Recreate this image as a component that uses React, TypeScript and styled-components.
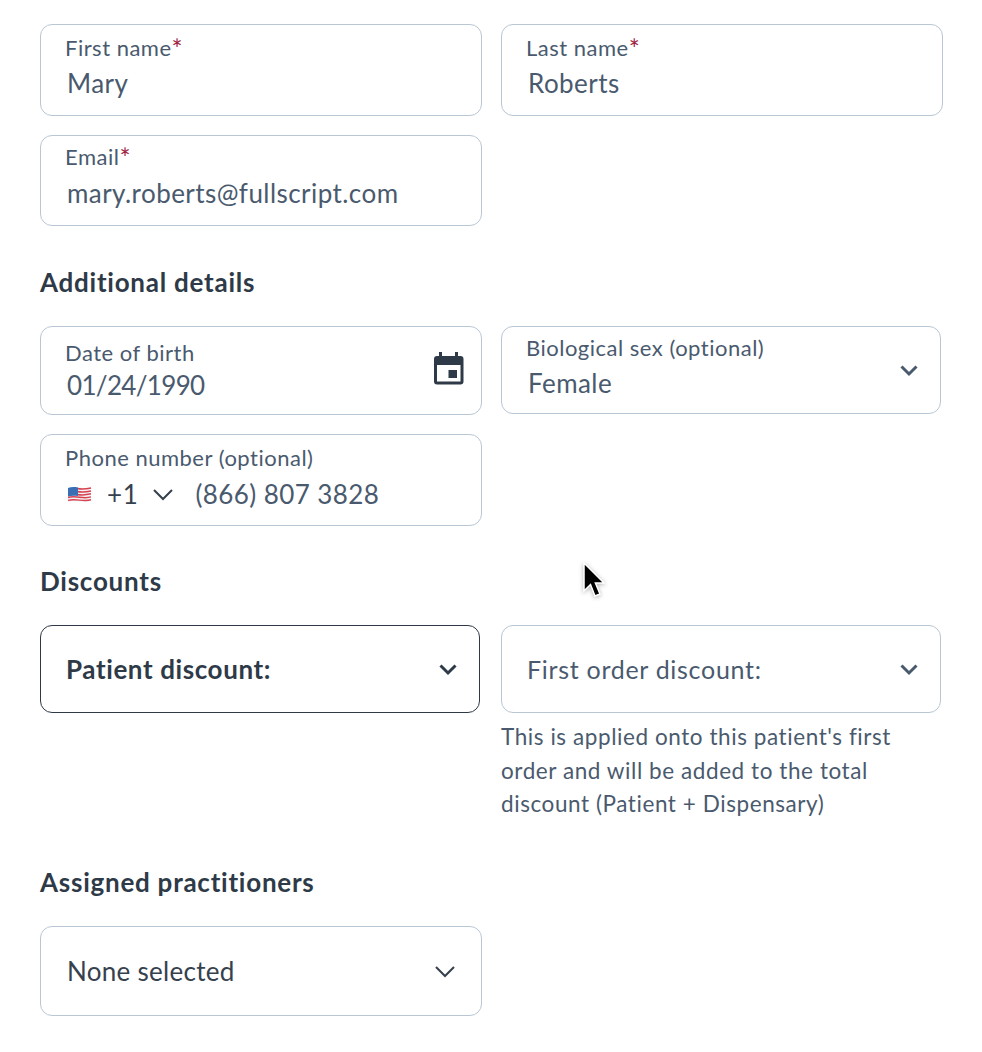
import React from 'react';
import styled, { createGlobalStyle } from 'styled-components';

const GlobalStyle = createGlobalStyle`
  html, body {
    margin: 0;
    padding: 0;
    background: #fff;
  }
  body {
    font-family: "Lato", "Open Sans", sans-serif;
    color: #4a5a6e;
  }
`;

const Page = styled.div`
  position: relative;
  width: 982px;
  height: 1052px;
  box-sizing: border-box;
  padding: 24px 0 0 40px;
  overflow: hidden;
`;

const Row = styled.div<{ $mb?: number; $gap?: number }>`
  display: flex;
  align-items: flex-start;
  gap: ${(p) => p.$gap ?? 19}px;
  margin-bottom: ${(p) => p.$mb ?? 19}px;
`;

const Column = styled.div`
  display: flex;
  flex-direction: column;
`;

const Box = styled.div<{ $w?: number; $h: number; $dark?: boolean; $pr?: number }>`
  box-sizing: border-box;
  width: ${(p) => p.$w ?? 442}px;
  height: ${(p) => p.$h}px;
  border: 1px solid ${(p) => (p.$dark ? '#2e3a47' : '#b9c6d3')};
  border-radius: 12px;
  background: #fff;
  display: flex;
  align-items: center;
  justify-content: space-between;
  padding: 0 ${(p) => p.$pr ?? 20}px 0 24px;
`;

const Stack = styled.div`
  display: flex;
  flex-direction: column;
`;

const Label = styled.div<{ $mt?: number }>`
  font-size: 22px;
  line-height: 24px;
  letter-spacing: 0.5px;
  color: #4a5a6e;
  margin-top: ${(p) => p.$mt ?? 0}px;
  white-space: nowrap;
`;

const Req = styled.span`
  color: #9e2343;
  font-size: 26px;
  line-height: 0;
  vertical-align: -3px;
`;

const Value = styled.div<{ $mt?: number; $dark?: boolean; $ls?: number }>`
  font-size: 26px;
  line-height: 30px;
  letter-spacing: ${(p) => p.$ls ?? 0.44}px;
  color: ${(p) => (p.$dark ? '#36414e' : '#4a5a6e')};
  margin: ${(p) => p.$mt ?? 8}px 0 0 2px;
  white-space: nowrap;
`;

const Prompt = styled.div<{ $bold?: boolean }>`
  font-size: ${(p) => (p.$bold ? 26 : 25)}px;
  letter-spacing: ${(p) => (p.$bold ? 0.6 : 0.7)}px;
  font-weight: ${(p) => (p.$bold ? 700 : 400)};
  color: ${(p) => (p.$bold ? '#2e3a47' : '#4a5a6e')};
  margin-left: 1px;
  white-space: nowrap;
`;

const Heading = styled.h2<{ $mb: number }>`
  margin: 0 0 ${(p) => p.$mb}px;
  font-size: 26px;
  line-height: 30px;
  font-weight: 700;
  letter-spacing: 0.75px;
  color: #2e3a47;
`;

const Help = styled.p`
  width: 420px;
  margin: 7px 0 0;
  font-size: 22.5px;
  line-height: 33.5px;
  letter-spacing: 0.57px;
  color: #4a5a6e;
`;

const PhoneLine = styled.div`
  display: flex;
  align-items: center;
  margin: 9px 0 0 2px;
  height: 30px;
`;

const Dial = styled.span`
  font-size: 26px;
  letter-spacing: 0.6px;
  color: #36414e;
  margin: 0 14px 0 15px;
`;

const PhoneNumber = styled.span`
  font-size: 26px;
  letter-spacing: 0.42px;
  color: #4a5a6e;
  margin-left: 21px;
`;

const Cursor = styled.svg`
  position: absolute;
  left: 580px;
  top: 560px;
  filter: drop-shadow(0 1px 2px rgba(0, 0, 0, 0.3));
`;

const CalendarSvg = styled.svg`
  margin-bottom: 4px;
`;

const Chevron = ({ thin = false, color = '#4a5a6e' }: { thin?: boolean; color?: string }) => (
  <svg width="22" height="14" viewBox="0 0 22 14" fill="none">
    <path
      d={thin ? 'M2 3l9 9 9-9' : 'M3.500 3.500L11 11l7.500-7.500'}
      stroke={color}
      strokeWidth={thin ? 2 : 3}
    />
  </svg>
);

const CalendarIcon = () => (
  <CalendarSvg width="30" height="33" viewBox="0 0 30 33">
    <path
      fill="#2e3a47"
      fillRule="evenodd"
      d="M5 0h3v4h13V0h3v4h2.500A3 3 0 0 1 29.500 7v22.500a3 3 0 0 1-3 3H3a3 3 0 0 1-3-3V7a3 3 0 0 1 3-3h2V0zM3 13v16.500h23.500V13H3zm11.500 5H23v8h-8.500v-8z"
    />
  </CalendarSvg>
);

const Flag = () => (
  <svg width="25" height="19" viewBox="0 0 25 19">
    <path fill="#f3f3f5" d="M1 3c8-3 15 2 23-1v14c-8 3-15-2-23 1z" />
    <path
      fill="none"
      stroke="#d9414f"
      strokeWidth="1.500"
      d="M10 3.600c5 1 9 .6 14-.6M10 6.500c5 1 9 .6 14-.6M10 9.400c5 1 9 .6 14-.6M1 12.500c8-2.500 15 2 23-.6M1 15.400c8-2.500 15 2 23-.6"
    />
    <path fill="#3a6fb5" d="M1 3c3-1.100 6-1.100 10-.5v8.500c-4-.6-7-.5-10 .5z" />
  </svg>
);

const Pointer = () => (
  <Cursor width="28" height="40" viewBox="0 0 28 40">
    <path
      d="M4 3v28l6.500-6.500 4.500 11.500 5-2-4.600-11H24z"
      fill="#000"
      stroke="#fff"
      strokeWidth="1.500"
    />
  </Cursor>
);

export default function App() {
  return (
    <>
      <GlobalStyle />
      <Page>
        <Row>
          <Box $h={92}>
            <Stack>
              <Label $mt={-6}>First name<Req>*</Req></Label>
              <Value>Mary</Value>
            </Stack>
          </Box>
          <Box $h={92}>
            <Stack>
              <Label $mt={-6}>Last name<Req>*</Req></Label>
              <Value>Roberts</Value>
            </Stack>
          </Box>
        </Row>
        <Row $mb={41}>
          <Box $h={91}>
            <Stack>
              <Label $mt={-9}>Email<Req>*</Req></Label>
              <Value $mt={9}>mary.roberts@fullscript.com</Value>
            </Stack>
          </Box>
        </Row>
        <Heading $mb={29}>Additional details</Heading>
        <Row>
          <Box $h={89} $pr={17}>
            <Stack>
              <Label>Date of birth</Label>
              <Value $mt={5} $ls={-0.66}>01/24/1990</Value>
            </Stack>
            <CalendarIcon />
          </Box>
          <Box $w={440} $h={88}>
            <Stack>
              <Label $mt={-6}>Biological sex (optional)</Label>
              <Value>Female</Value>
            </Stack>
            <Chevron />
          </Box>
        </Row>
        <Row $mb={40}>
          <Box $h={92}>
            <Stack>
              <Label $mt={-5}>Phone number (optional)</Label>
              <PhoneLine>
                <Flag />
                <Dial>+1</Dial>
                <Chevron thin color="#36414e" />
                <PhoneNumber>(866) 807 3828</PhoneNumber>
              </PhoneLine>
            </Stack>
          </Box>
        </Row>
        <Heading $mb={29}>Discounts</Heading>
        <Row $mb={46} $gap={21}>
          <Box $w={440} $h={88} $dark $pr={20}>
            <Prompt $bold>Patient discount:</Prompt>
            <Chevron color="#2e3a47" />
          </Box>
          <Column>
            <Box $w={440} $h={88}>
              <Prompt>First order discount:</Prompt>
              <Chevron />
            </Box>
            <Help>
              This is applied onto this patient's first order and will be added to the total
              discount (Patient + Dispensary)
            </Help>
          </Column>
        </Row>
        <Heading $mb={29}>Assigned practitioners</Heading>
        <Row>
          <Box $h={90} $pr={25}>
            <Value $mt={0} $dark $ls={0.28}>None selected</Value>
            <Chevron thin color="#36414e" />
          </Box>
        </Row>
        <Pointer />
      </Page>
    </>
  );
}
